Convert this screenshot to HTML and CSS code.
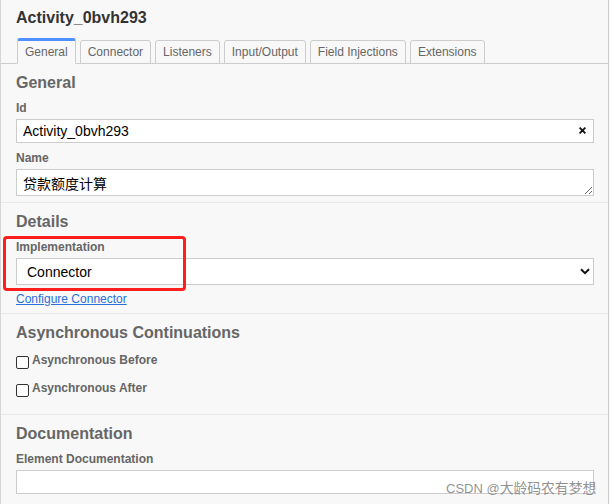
FILE: index.html
```html
<!DOCTYPE html>
<html lang="en">
<head>
<meta charset="utf-8">
<title>Properties</title>
<link rel="stylesheet" href="styles.css">
</head>
<body>
<div class="panel">
  <div class="header">
    <h1 class="title">Activity_0bvh293</h1>
  </div>
  <ul class="tabs">
    <li class="tab active">General</li>
    <li class="tab">Connector</li>
    <li class="tab">Listeners</li>
    <li class="tab">Input/Output</li>
    <li class="tab">Field Injections</li>
    <li class="tab">Extensions</li>
  </ul>

  <div class="group">
    <h2 class="group-title">General</h2>
    <div class="field">
      <label class="field-label">Id</label>
      <div class="input-wrap">
        <input class="text-input" type="text" value="Activity_0bvh293">
        <svg class="clear-icon" width="7" height="7" viewBox="0 0 7 7"><path d="M0.6 0.6 L6.4 6.4 M6.4 0.6 L0.6 6.4" stroke="#111" stroke-width="1.8" fill="none"/></svg>
      </div>
    </div>
    <div class="field">
      <label class="field-label">Name</label>
      <textarea class="name-area">贷款额度计算</textarea>
    </div>
  </div>

  <div class="group">
    <h2 class="group-title">Details</h2>
    <div class="field field-tight">
      <label class="field-label">Implementation</label>
      <div class="select-wrap">
        <select class="select-input">
          <option>Connector</option>
        </select>
        <svg class="chevron" width="10" height="7" viewBox="0 0 10 7"><path d="M1 1.2 L5 5.2 L9 1.2" stroke="#111" stroke-width="2" fill="none"/></svg>
      </div>
    </div>
    <div class="link-row"><a class="link" href="#">Configure Connector</a></div>
  </div>

  <div class="group">
    <h2 class="group-title">Asynchronous Continuations</h2>
    <div class="checks">
      <div class="check-row"><input class="check" type="checkbox" id="ab"><label class="check-label" for="ab">Asynchronous Before</label></div>
      <div class="check-row"><input class="check" type="checkbox" id="aa"><label class="check-label" for="aa">Asynchronous After</label></div>
    </div>
  </div>

  <div class="group last">
    <h2 class="group-title">Documentation</h2>
    <div class="field">
      <label class="field-label">Element Documentation</label>
      <div class="doc-area" contenteditable="true"></div>
    </div>
  </div>
</div>
<div class="highlight"></div>
<div class="watermark">CSDN @<span class="wm-cjk">大龄码农有梦想</span></div>
</body>
</html>
```

FILE: styles.css
```css
html, body {
  margin: 0;
  padding: 0;
  background: #f8f8f8;
}
body {
  font-family: "Liberation Sans", Arial, "Noto Sans CJK SC", sans-serif;
  position: relative;
  width: 610px;
  height: 504px;
  overflow: hidden;
}
.panel {
  width: 607px;
  min-height: 504px;
  border-left: 1px solid #d6d6d6;
  border-right: 1px solid #cccccc;
  background: #f8f8f8;
}
.header {
  padding: 8px 15px 0 15px;
}
.title {
  margin: 0;
  font-size: 16px;
  line-height: 20px;
  font-weight: bold;
  color: #333;
}
.tabs {
  list-style: none;
  margin: 10px 0 0 0;
  padding: 0 0 0 16px;
  display: flex;
  align-items: flex-end;
  border-bottom: 1px solid #cccccc;
}
.tab {
  margin: 0 4px -1px 0;
  padding: 0 7px;
  height: 22px;
  line-height: 22px;
  font-size: 12px;
  color: #666;
  border: 1px solid #cccccc;
  border-radius: 3px 3px 0 0;
  background: #f8f8f8;
  white-space: nowrap;
}
.tab.active {
  border-top: 3px solid #4d90fe;
  border-bottom-color: #f8f8f8;
}
.group {
  padding: 8px 14px 6px 15px;
  border-bottom: 1px solid #e8e8e8;
}
.group.last {
  border-bottom: none;
}
.group-title {
  margin: 0 0 8px 0;
  font-size: 16px;
  line-height: 21px;
  font-weight: bold;
  color: #666;
}
.field {
  margin-bottom: 8px;
}
.field:last-child,
.field.field-tight {
  margin-bottom: 0;
}
.field-label {
  display: block;
  margin-bottom: 3px;
  font-size: 12px;
  line-height: 15px;
  font-weight: bold;
  color: #666;
}
.input-wrap, .select-wrap {
  position: relative;
}
.text-input {
  display: block;
  box-sizing: border-box;
  width: 100%;
  height: 24px;
  margin: 0;
  padding: 0 24px 0 6px;
  border: 1px solid #cccccc;
  background: #fff;
  font-family: "Liberation Sans", Arial, sans-serif;
  font-size: 14px;
  color: #000;
  outline: none;
}
.clear-icon {
  position: absolute;
  right: 8px;
  top: 8px;
}
.name-area {
  display: block;
  box-sizing: border-box;
  width: 100%;
  height: 27px;
  margin: 0;
  padding: 3px 6px 0 6px;
  border: 1px solid #cccccc;
  background: #fff;
  font-family: "Noto Sans CJK SC", "Liberation Sans", sans-serif;
  font-size: 14px;
  line-height: 20px;
  color: #000;
  resize: vertical;
  overflow: hidden;
  outline: none;
}
.select-input {
  display: block;
  box-sizing: border-box;
  width: 100%;
  height: 27px;
  margin: 0;
  padding: 0 24px 0 10px;
  border: 1px solid #cccccc;
  border-radius: 0;
  background: #fff;
  font-family: "Liberation Sans", Arial, sans-serif;
  font-size: 14px;
  color: #000;
  -webkit-appearance: none;
  appearance: none;
  outline: none;
}
.chevron {
  position: absolute;
  right: 4px;
  top: 10px;
  pointer-events: none;
}
.link-row {
  margin: 7px 0 0 0;
  font-size: 12px;
  line-height: 15px;
}
.link {
  color: #2a6fdb;
  text-decoration: underline;
}
.checks {
  padding: 2px 0 12px 0;
}
.check-row {
  display: flex;
  align-items: flex-start;
  height: 15px;
}
.check-row + .check-row {
  margin-top: 13px;
}
.check {
  -webkit-appearance: none;
  appearance: none;
  box-sizing: border-box;
  width: 13px;
  height: 13px;
  margin: 3px 3px 0 0;
  border: 1px solid #333;
  border-radius: 2px;
  background: #fff;
  flex: none;
}
.check-label {
  font-size: 12px;
  line-height: 15px;
  font-weight: bold;
  color: #666;
}
.doc-area {
  box-sizing: border-box;
  width: 100%;
  height: 24px;
  border: 1px solid #cccccc;
  background: #fff;
  outline: none;
}
.highlight {
  position: absolute;
  left: 3px;
  top: 236px;
  width: 177px;
  height: 49px;
  border: 3px solid #ff1e1e;
  border-radius: 4px;
  pointer-events: none;
}
.watermark {
  position: absolute;
  left: 446px;
  top: 479px;
  font-family: "Liberation Sans", Arial, "Noto Sans CJK SC", sans-serif;
  font-size: 13px;
  line-height: 17px;
  color: rgba(125, 125, 125, 0.85);
  white-space: nowrap;
  pointer-events: none;
}
.wm-cjk {
  font-family: "Noto Sans CJK SC", sans-serif;
  font-size: 13.8px;
}
```
